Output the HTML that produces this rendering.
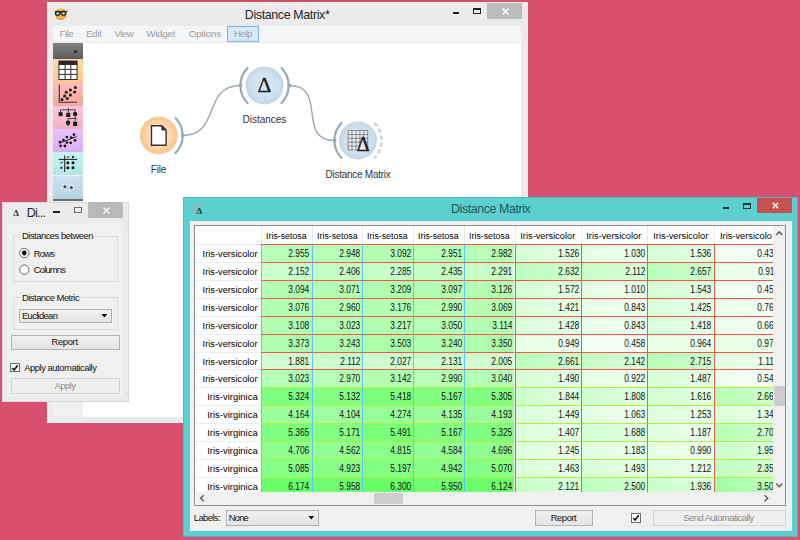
<!DOCTYPE html>
<html><head><meta charset="utf-8"><title>Distance Matrix</title>
<style>
html,body{margin:0;padding:0}
body{width:800px;height:540px;overflow:hidden;background:#d85070;position:relative;font-family:"Liberation Sans",sans-serif;font-size:9.5px;color:#000}
.abs,.abs *{position:absolute}
div,span,i,b{box-sizing:border-box}
.t{position:absolute;white-space:nowrap;line-height:1}
/* main window */
#mw{position:absolute;left:47px;top:2.4px;width:481px;height:420.6px;background:#ebebeb;box-shadow:inset 0 0 0 1px #efefef}
#menubar{position:absolute;left:53px;top:26.4px;width:468px;height:16.1px;background:#f5f6f7}
#help{position:absolute;left:227.2px;top:26.4px;width:31.5px;height:15.5px;background:#d8eaf9;border:1px solid #7eb4ea}
#canvas{position:absolute;left:83px;top:42.5px;width:438px;height:374px;background:#fff}
#tb{position:absolute;left:53px;top:42.5px;width:30px;height:374px;background:#f0f0f0}
#tb div{position:absolute;left:0;width:30px}
.nl{position:absolute;font-size:10px;line-height:12px;height:12px;white-space:nowrap;color:#333;transform:translateX(-50%)}
/* small window */
#sw{position:absolute;left:2px;top:201.5px;width:126.6px;height:200.6px;background:#ebebeb;border:1px solid #d9d9d9}
#swi{position:absolute;left:8px;top:225px;width:115px;height:171.3px;background:#f0f0f0}
.gb{position:absolute;border:1px solid #dcdcdc}
.btn{position:absolute;border:1px solid #b2b2b2;background:linear-gradient(#f1f1f1,#e4e4e4);text-align:center}
.btn.dis{border-color:#d5d5d5;background:#efefef;color:#8a8a8a}
.cb{position:absolute;border:1px solid #b2b2b2;background:linear-gradient(#f1f1f1,#e4e4e4)}
.chk{position:absolute;border:1px solid #707070;background:#fff}
/* big window */
#bw{position:absolute;left:183px;top:196.8px;width:614.5px;height:340.4px;background:#5ccfcf;border:1px solid #4fbcbc}
#bwi{position:absolute;left:189.5px;top:220.7px;width:602px;height:310.5px;background:#f0f0f0}
#tf{position:absolute;left:194px;top:225.4px;width:592.3px;height:280.3px;background:#fff;border:1px solid #8a8f98}
.tv{position:absolute;overflow:hidden;background:#fff;font-size:9.7px;}
.tv div{position:absolute;white-space:nowrap;overflow:hidden}
.ch{top:0;height:18px;line-height:19.5px;text-align:center;color:#000}
.hs{position:absolute;top:0;width:1px;height:18px;background:#e5eaf3}
.rh{left:0;width:66px;height:18px;line-height:18px;text-align:right;padding-right:3px;border-top:1px solid #e9eef6}
.c{height:18px;line-height:17px;text-align:right;padding-right:2px;border-left:1px solid;border-top:1px solid;color:#101010}
.tv b{display:inline-block;font-weight:normal;transform-origin:100% 50%}
.tv .ch b{transform-origin:50% 50%}
.n{transform:scaleX(0.8312)}.se{transform:scaleX(0.9063)}.ve{transform:scaleX(0.9550)}.vi{transform:scaleX(0.9770)}.n{font-size:10.1px}
.sb{position:absolute;background:#f0f0f0}
.thumb{position:absolute;background:#cdcdcd}
</style></head><body>

<!-- ================= main window ================= -->
<div id="mw"></div>
<svg style="position:absolute;left:53px;top:7px" width="16" height="14" viewBox="0 0 16 14">
 <defs><radialGradient id="og" cx="45%" cy="25%" r="80%"><stop offset="0" stop-color="#ffd034"/><stop offset="0.55" stop-color="#fba414"/><stop offset="1" stop-color="#ea7004"/></radialGradient>
 <radialGradient id="lg" cx="50%" cy="50%" r="60%"><stop offset="0" stop-color="#d6ecf4"/><stop offset="0.45" stop-color="#6f9fb4"/><stop offset="1" stop-color="#1f3f4c"/></radialGradient></defs>
 <circle cx="7.75" cy="7" r="5.8" fill="url(#og)"/>
 <ellipse cx="4.7" cy="6.3" rx="2.5" ry="2.2" fill="url(#lg)" stroke="#1d1d1d" stroke-width="1"/>
 <ellipse cx="10.5" cy="6.3" rx="2.5" ry="2.2" fill="url(#lg)" stroke="#1d1d1d" stroke-width="1"/>
 <path d="M2 4.6 H13 L14.3 4" stroke="#1d1d1d" stroke-width="1.1" fill="none"/>
 <path d="M5.2 10.1 Q7.7 11.3 10.2 10.1" stroke="#ffe7a0" stroke-width="1.1" fill="none"/>
</svg>
<!-- controls -->
<div style="position:absolute;left:452.5px;top:12px;width:6.5px;height:2px;background:#222"></div>
<div style="position:absolute;left:473px;top:8px;width:8px;height:6px;border:1px solid #222;border-top-width:2px"></div>
<div style="position:absolute;left:487px;top:2.5px;width:35px;height:16px;background:#bcbcbc"></div>
<svg style="position:absolute;left:500.5px;top:6.9px" width="9" height="9" viewBox="0 0 9 9"><path d="M1.5 1.5 L7.5 7.5 M7.5 1.5 L1.5 7.5" stroke="#fff" stroke-width="1.4"/></svg>

<div id="menubar">
</div>
<div id="help"></div>

<div id="canvas"></div>
<div id="tb">
 <div style="top:0.5px;height:16px;background:linear-gradient(#828282,#5c5c5c)"></div>
 <div style="top:16.5px;height:23.3px;background:linear-gradient(#ffd9a6,#fcc98c)"></div>
 <div style="top:39.8px;height:23.3px;background:linear-gradient(#ffbcb6,#f4a7a0)"></div>
 <div style="top:63.1px;height:23.3px;background:linear-gradient(#fcc6dd,#f1b0c9)"></div>
 <div style="top:86.4px;height:23.3px;background:linear-gradient(#e9c2fd,#dcaef4)"></div>
 <div style="top:109.7px;height:23.3px;background:linear-gradient(#c5f5f3,#b0e6e4)"></div>
 <div style="top:133px;height:23.5px;background:linear-gradient(#cfe3f0,#b7d1e3)"></div>
 <div style="top:156.5px;height:2px;background:#6e6e6e"></div>
</div>
<svg style="position:absolute;left:53px;top:42px" width="30" height="160" viewBox="53 42 30 160">
 <!-- table icon -->
 <rect x="58.9" y="61" width="18.2" height="18.5" fill="#fff" stroke="#2e2e2e" stroke-width="1"/>
 <rect x="58.9" y="61" width="18.2" height="4" fill="#2a2a2a"/>
 <path d="M65.1 65v14.5M70.8 65v14.5M58.9 69.4h18.2M58.9 74.4h18.2" stroke="#2e2e2e" stroke-width="1" fill="none"/>
 <!-- scatter icon -->
 <path d="M59.3 84.4V102.3H77" stroke="#333" stroke-width="1.1" fill="none"/>
 <g fill="#161616"><circle cx="62" cy="99.4" r="1.5"/><circle cx="64.6" cy="96.1" r="1.5"/><circle cx="67.3" cy="98.5" r="1.5"/><circle cx="66.3" cy="92.2" r="1.5"/><circle cx="70.4" cy="95.1" r="1.5"/><circle cx="70.4" cy="89.9" r="1.5"/><circle cx="74.6" cy="92" r="1.5"/><circle cx="75.3" cy="87.4" r="1.5"/></g>
 <!-- tree icon -->
 <path d="M68.3 107.8V113M60.6 113V109.8H75.2V113M75.2 114V118.5M68.2 121V118.5H76.6M75.2 118.5V122M68.2 124v2.2" stroke="#333" stroke-width="0.9" fill="none"/>
 <g fill="#1c1c1c"><rect x="58.6" y="112.2" width="4" height="4"/><rect x="66.2" y="112.9" width="4.1" height="4.1"/><circle cx="75.1" cy="113.9" r="2.2"/><circle cx="68.1" cy="122.8" r="2.2"/><rect x="73.1" y="121.8" width="4.1" height="4.2"/></g>
 <!-- regression icon -->
 <path d="M59.2 143.2L76.6 136.6" stroke="#222" stroke-width="1" fill="none"/>
 <g fill="#161616"><circle cx="60.1" cy="142.1" r="1.4"/><circle cx="60.6" cy="145.8" r="1.4"/><circle cx="63.5" cy="140.1" r="1.4"/><circle cx="64.9" cy="146" r="1.4"/><circle cx="66.9" cy="137.1" r="1.4"/><circle cx="66.9" cy="142.6" r="1.4"/><circle cx="70.7" cy="142.8" r="1.4"/><circle cx="71.2" cy="137.7" r="1.4"/><circle cx="74" cy="134.6" r="1.4"/><circle cx="75.1" cy="140.4" r="1.4"/></g>
 <!-- confusion icon -->
 <path d="M58.5 159.4H77.2M64.7 155.5V172" stroke="#1c1c1c" stroke-width="1" fill="none"/>
 <g fill="#111"><circle cx="67.8" cy="162.8" r="1.5"/><circle cx="73" cy="162.8" r="1.5"/><circle cx="67.8" cy="167.8" r="1.5"/><circle cx="73" cy="167.8" r="1.5"/></g>
 <path d="M66.8 157l0.9 0.8l1.6-1.8M60.4 162.6l0.9 0.8l1.6-1.8" stroke="#1a1a1a" stroke-width="1" fill="none"/>
 <path d="M72.2 156.2l1.6 1.6m0-1.6l-1.6 1.6M60.6 167l1.6 1.6m0-1.6l-1.6 1.6" stroke="#1a1a1a" stroke-width="1.1" fill="none"/>
 <!-- faded icon -->
 <g fill="#f0eaee" opacity="0.95"><circle cx="63" cy="184.6" r="1"/><circle cx="66" cy="184" r="1"/><circle cx="62.3" cy="188.6" r="1"/><circle cx="65.8" cy="189.7" r="1"/><circle cx="70.2" cy="185" r="1"/><circle cx="73.2" cy="186" r="1"/><circle cx="69.5" cy="190.5" r="1"/><circle cx="73.4" cy="189.5" r="1"/></g>
 <circle cx="64.9" cy="186.8" r="1.3" fill="#333"/><circle cx="71.4" cy="187.6" r="1.3" fill="#333"/>
</svg>

<!-- canvas scene -->
<svg style="position:absolute;left:83px;top:42.5px" width="438" height="374" viewBox="83 42.5 438 374">
 <defs>
  <radialGradient id="gf" cx="50%" cy="50%" r="50%"><stop offset="0" stop-color="#fde6ca"/><stop offset="0.6" stop-color="#fcd9b0"/><stop offset="0.93" stop-color="#fac790"/><stop offset="1" stop-color="#fbd0a4"/></radialGradient>
  <radialGradient id="gd" cx="50%" cy="50%" r="50%"><stop offset="0" stop-color="#dbe8f2"/><stop offset="0.75" stop-color="#cfe0ed"/><stop offset="1" stop-color="#c0d5e6"/></radialGradient>
 </defs>
 <g fill="#98abb4" stroke="none"><circle cx="182.8" cy="135" r="2"/><circle cx="240.6" cy="85" r="2"/><circle cx="289.4" cy="85" r="2"/><circle cx="334.6" cy="140" r="2"/></g>
 <g fill="none" stroke="#9bacb3" stroke-width="1.5">
  <path d="M182.5 135 C221 135 202 85 240.5 85"/>
  <path d="M289.5 85 C328 85 296 140 334.5 140"/>
 </g>
 <g fill="none" stroke="#98abb4" stroke-width="2.2" stroke-linecap="round">
  <path d="M175.5 117.5 A25 25 0 0 1 175.5 152.5"/>
  <path d="M247.5 67.5 A25 25 0 0 0 247.5 102.5"/>
  <path d="M281.5 67.5 A25 25 0 0 1 281.5 102.5"/>
  <path d="M341.5 122.5 A25 25 0 0 0 341.5 157.5"/>
 </g>
 <path d="M374.5 122.5 A25 25 0 0 1 374.5 157.5" fill="none" stroke="#cdd5d9" stroke-width="2.6" stroke-dasharray="4.3 2.8"/>
 <circle cx="158.8" cy="135" r="19" fill="url(#gf)"/>
 <circle cx="264.5" cy="85" r="19" fill="url(#gd)"/>
 <circle cx="358" cy="140" r="19" fill="url(#gd)"/>
 <!-- file icon -->
 <path d="M151.5 125.2 H161.8 L166.1 129.5 V144.7 H151.5 Z" fill="#fff" stroke="#333" stroke-width="1.4" stroke-linejoin="miter"/>
 <path d="M161.8 125.2 V129.5 H166.1 Z" fill="#333" stroke="#333" stroke-width="0.8"/>
 <!-- matrix icon -->
 <g stroke="#5c5c5c" stroke-width="0.65" fill="none">
  <rect x="348.1" y="130.2" width="19.7" height="19.2" fill="#e3edf6"/>
  <path d="M348.1 134h19.7M348.1 137.9h19.7M348.1 141.7h19.7M348.1 145.6h19.7M352 130.2v19.2M356 130.2v19.2M359.9 130.2v19.2M363.9 130.2v19.2"/>
 </g>
 <polygon points="363.2,139 358.6,149.4 368,149.4" fill="#eef3f8" opacity="0.85"/>
 <text x="264.5" y="91.8" text-anchor="middle" font-family="Liberation Serif, serif" font-size="21.5" fill="#1a1a1a" stroke="#1a1a1a" stroke-width="0.3">Δ</text>
 <text x="363.1" y="150.2" text-anchor="middle" font-family="Liberation Serif, serif" font-size="20" fill="#1e1e1e" stroke="#1e1e1e" stroke-width="0.45">Δ</text>
</svg>

<!-- ================= small window ================= -->
<div id="sw"></div>
<div id="swi"></div>
<div style="position:absolute;left:53px;top:211px;width:7px;height:2px;background:#222"></div>
<div style="position:absolute;left:74px;top:207px;width:8px;height:5.5px;border:1px solid #6a6a6a;border-top-width:1.6px"></div>
<div style="position:absolute;left:88px;top:202px;width:35px;height:15.5px;background:#b9b9b9"></div>
<svg style="position:absolute;left:101.5px;top:206px" width="9" height="9" viewBox="0 0 9 9"><path d="M1.5 1.5 L7.5 7.5 M7.5 1.5 L1.5 7.5" stroke="#fff" stroke-width="1.3"/></svg>

<div class="gb" style="left:13.2px;top:235.5px;width:104.5px;height:46.8px"></div>
<svg style="position:absolute;left:18px;top:246px" width="13" height="31" viewBox="0 0 13 31">
 <circle cx="6.3" cy="7" r="4.7" fill="#fff" stroke="#5a5a5a" stroke-width="0.9"/>
 <circle cx="6.3" cy="7" r="2.4" fill="#111"/>
 <circle cx="6.3" cy="23.7" r="4.7" fill="#fff" stroke="#5a5a5a" stroke-width="0.9"/>
</svg>

<div class="gb" style="left:13.2px;top:297px;width:104.5px;height:32.5px"></div>
<div class="cb" style="left:19.3px;top:308.5px;width:92.5px;height:14.5px"></div>
<svg style="position:absolute;left:101px;top:314px" width="7" height="4" viewBox="0 0 7 4"><path d="M0.3 0 H6.3 L3.3 3.6 Z" fill="#111"/></svg>

<div class="btn" style="left:11px;top:334.5px;width:109px;height:15.3px"></div>

<div class="chk" style="left:10.2px;top:362.5px;width:9.7px;height:9.7px"></div>
<svg style="position:absolute;left:11.2px;top:363.5px" width="8" height="8" viewBox="0 0 8 8"><path d="M1.2 4 L3.1 6 L6.8 1.3" fill="none" stroke="#111" stroke-width="1.5"/></svg>

<div class="btn dis" style="left:11px;top:377.8px;width:109px;height:15.8px"></div>

<!-- ================= big window ================= -->
<div id="bw"></div>
<div style="position:absolute;left:193px;top:204px;width:8.5px;height:8.5px;background:#84bcbe"></div>
<div style="position:absolute;left:723px;top:206.5px;width:6px;height:2px;background:#163838"></div>
<div style="position:absolute;left:743px;top:202.5px;width:8.3px;height:6.3px;border:1px solid #163838;border-top-width:2px"></div>
<div style="position:absolute;left:757px;top:197.5px;width:35px;height:15.5px;background:#c75050"></div>
<svg style="position:absolute;left:770.5px;top:201.2px" width="9" height="9" viewBox="0 0 9 9"><path d="M1.8 1.8 L7.2 7.2 M7.2 1.8 L1.8 7.2" stroke="#fff" stroke-width="1.25"/></svg>

<div id="bwi"></div>
<div id="tf"></div>
<div class="tv" style="left:195px;top:226px;width:578px;height:266px">
<div class="ch" style="left:66.00px;width:50.70px"><b class="se">Iris-setosa</b></div>
<div class="ch" style="left:116.70px;width:50.70px"><b class="se">Iris-setosa</b></div>
<div class="ch" style="left:167.40px;width:50.70px"><b class="se">Iris-setosa</b></div>
<div class="ch" style="left:218.10px;width:50.70px"><b class="se">Iris-setosa</b></div>
<div class="ch" style="left:268.80px;width:50.70px"><b class="se">Iris-setosa</b></div>
<div class="ch" style="left:319.50px;width:66.40px"><b class="ve">Iris-versicolor</b></div>
<div class="ch" style="left:385.90px;width:66.40px"><b class="ve">Iris-versicolor</b></div>
<div class="ch" style="left:452.30px;width:66.40px"><b class="ve">Iris-versicolor</b></div>
<div class="ch" style="left:518.70px;width:58.70px;text-align:left;padding-left:5.90px"><b class="ve" style="transform-origin:0 50%">Iris-versicolor</b></div>
<i class="hs" style="left:66.00px"></i>
<i class="hs" style="left:116.70px"></i>
<i class="hs" style="left:167.40px"></i>
<i class="hs" style="left:218.10px"></i>
<i class="hs" style="left:268.80px"></i>
<i class="hs" style="left:319.50px"></i>
<i class="hs" style="left:385.90px"></i>
<i class="hs" style="left:452.30px"></i>
<i class="hs" style="left:518.70px"></i>
<i class="hs" style="left:585.10px"></i>
<div class="rh" style="top:18.00px"><b class="ve">Iris-versicolor</b></div>
<div class="c" style="left:66.00px;top:18.00px;width:50.70px;background:#b8ffb8;border-left-color:#5cc4f8;border-top-color:#ee5a44"><b class="n">2.955</b></div>
<div class="c" style="left:116.70px;top:18.00px;width:50.70px;background:#b8ffb8;border-left-color:#5cc4f8;border-top-color:#ee5a44"><b class="n">2.948</b></div>
<div class="c" style="left:167.40px;top:18.00px;width:50.70px;background:#b5ffb5;border-left-color:#5cc4f8;border-top-color:#ee5a44"><b class="n">3.092</b></div>
<div class="c" style="left:218.10px;top:18.00px;width:50.70px;background:#b8ffb8;border-left-color:#5cc4f8;border-top-color:#ee5a44"><b class="n">2.951</b></div>
<div class="c" style="left:268.80px;top:18.00px;width:50.70px;background:#b7ffb7;border-left-color:#5cc4f8;border-top-color:#ee5a44"><b class="n">2.982</b></div>
<div class="c" style="left:319.50px;top:18.00px;width:66.40px;background:linear-gradient(90deg,#d6ffd6,#e5ffe5);border-left-color:#ee5a44;border-top-color:#ee5a44"><b class="n">1.526</b></div>
<div class="c" style="left:385.90px;top:18.00px;width:66.40px;background:linear-gradient(90deg,#e3ffe3,#edffed);border-left-color:#ee5a44;border-top-color:#ee5a44"><b class="n">1.030</b></div>
<div class="c" style="left:452.30px;top:18.00px;width:66.40px;background:linear-gradient(90deg,#d6ffd6,#e4ffe4);border-left-color:#ee5a44;border-top-color:#ee5a44"><b class="n">1.536</b></div>
<div class="c" style="left:518.70px;top:18.00px;width:66.40px;background:linear-gradient(90deg,#f3fff3,#f7fff7);border-left-color:#ee5a44;border-top-color:#ee5a44"><b class="n">0.436</b></div>
<div class="rh" style="top:35.92px"><b class="ve">Iris-versicolor</b></div>
<div class="c" style="left:66.00px;top:35.92px;width:50.70px;background:#cbffcb;border-left-color:#5cc4f8;border-top-color:#ee5a44"><b class="n">2.152</b></div>
<div class="c" style="left:116.70px;top:35.92px;width:50.70px;background:#c5ffc5;border-left-color:#5cc4f8;border-top-color:#ee5a44"><b class="n">2.406</b></div>
<div class="c" style="left:167.40px;top:35.92px;width:50.70px;background:#c8ffc8;border-left-color:#5cc4f8;border-top-color:#ee5a44"><b class="n">2.285</b></div>
<div class="c" style="left:218.10px;top:35.92px;width:50.70px;background:#c5ffc5;border-left-color:#5cc4f8;border-top-color:#ee5a44"><b class="n">2.435</b></div>
<div class="c" style="left:268.80px;top:35.92px;width:50.70px;background:#c8ffc8;border-left-color:#5cc4f8;border-top-color:#ee5a44"><b class="n">2.291</b></div>
<div class="c" style="left:319.50px;top:35.92px;width:66.40px;background:linear-gradient(90deg,#b8ffb8,#d2ffd2);border-left-color:#ee5a44;border-top-color:#ee5a44"><b class="n">2.632</b></div>
<div class="c" style="left:385.90px;top:35.92px;width:66.40px;background:linear-gradient(90deg,#c6ffc6,#dbffdb);border-left-color:#ee5a44;border-top-color:#ee5a44"><b class="n">2.112</b></div>
<div class="c" style="left:452.30px;top:35.92px;width:66.40px;background:linear-gradient(90deg,#b8ffb8,#d1ffd1);border-left-color:#ee5a44;border-top-color:#ee5a44"><b class="n">2.657</b></div>
<div class="c" style="left:518.70px;top:35.92px;width:66.40px;background:linear-gradient(90deg,#e7ffe7,#efffef);border-left-color:#ee5a44;border-top-color:#ee5a44"><b class="n">0.911</b></div>
<div class="rh" style="top:53.84px"><b class="ve">Iris-versicolor</b></div>
<div class="c" style="left:66.00px;top:53.84px;width:50.70px;background:#b5ffb5;border-left-color:#5cc4f8;border-top-color:#ee5a44"><b class="n">3.094</b></div>
<div class="c" style="left:116.70px;top:53.84px;width:50.70px;background:#b5ffb5;border-left-color:#5cc4f8;border-top-color:#ee5a44"><b class="n">3.071</b></div>
<div class="c" style="left:167.40px;top:53.84px;width:50.70px;background:#b2ffb2;border-left-color:#5cc4f8;border-top-color:#ee5a44"><b class="n">3.209</b></div>
<div class="c" style="left:218.10px;top:53.84px;width:50.70px;background:#b5ffb5;border-left-color:#5cc4f8;border-top-color:#ee5a44"><b class="n">3.097</b></div>
<div class="c" style="left:268.80px;top:53.84px;width:50.70px;background:#b4ffb4;border-left-color:#5cc4f8;border-top-color:#ee5a44"><b class="n">3.126</b></div>
<div class="c" style="left:319.50px;top:53.84px;width:66.40px;background:linear-gradient(90deg,#d5ffd5,#e4ffe4);border-left-color:#ee5a44;border-top-color:#ee5a44"><b class="n">1.572</b></div>
<div class="c" style="left:385.90px;top:53.84px;width:66.40px;background:linear-gradient(90deg,#e4ffe4,#eeffee);border-left-color:#ee5a44;border-top-color:#ee5a44"><b class="n">1.010</b></div>
<div class="c" style="left:452.30px;top:53.84px;width:66.40px;background:linear-gradient(90deg,#d6ffd6,#e4ffe4);border-left-color:#ee5a44;border-top-color:#ee5a44"><b class="n">1.543</b></div>
<div class="c" style="left:518.70px;top:53.84px;width:66.40px;background:linear-gradient(90deg,#f3fff3,#f7fff7);border-left-color:#ee5a44;border-top-color:#ee5a44"><b class="n">0.458</b></div>
<div class="rh" style="top:71.76px"><b class="ve">Iris-versicolor</b></div>
<div class="c" style="left:66.00px;top:71.76px;width:50.70px;background:#b5ffb5;border-left-color:#5cc4f8;border-top-color:#ee5a44"><b class="n">3.076</b></div>
<div class="c" style="left:116.70px;top:71.76px;width:50.70px;background:#b8ffb8;border-left-color:#5cc4f8;border-top-color:#ee5a44"><b class="n">2.960</b></div>
<div class="c" style="left:167.40px;top:71.76px;width:50.70px;background:#b3ffb3;border-left-color:#5cc4f8;border-top-color:#ee5a44"><b class="n">3.176</b></div>
<div class="c" style="left:218.10px;top:71.76px;width:50.70px;background:#b7ffb7;border-left-color:#5cc4f8;border-top-color:#ee5a44"><b class="n">2.990</b></div>
<div class="c" style="left:268.80px;top:71.76px;width:50.70px;background:#b5ffb5;border-left-color:#5cc4f8;border-top-color:#ee5a44"><b class="n">3.069</b></div>
<div class="c" style="left:319.50px;top:71.76px;width:66.40px;background:linear-gradient(90deg,#d9ffd9,#e6ffe6);border-left-color:#ee5a44;border-top-color:#ee5a44"><b class="n">1.421</b></div>
<div class="c" style="left:385.90px;top:71.76px;width:66.40px;background:linear-gradient(90deg,#e8ffe8,#f0fff0);border-left-color:#ee5a44;border-top-color:#ee5a44"><b class="n">0.843</b></div>
<div class="c" style="left:452.30px;top:71.76px;width:66.40px;background:linear-gradient(90deg,#d9ffd9,#e6ffe6);border-left-color:#ee5a44;border-top-color:#ee5a44"><b class="n">1.425</b></div>
<div class="c" style="left:518.70px;top:71.76px;width:66.40px;background:linear-gradient(90deg,#eaffea,#f2fff2);border-left-color:#ee5a44;border-top-color:#ee5a44"><b class="n">0.768</b></div>
<div class="rh" style="top:89.68px"><b class="ve">Iris-versicolor</b></div>
<div class="c" style="left:66.00px;top:89.68px;width:50.70px;background:#b4ffb4;border-left-color:#5cc4f8;border-top-color:#ee5a44"><b class="n">3.108</b></div>
<div class="c" style="left:116.70px;top:89.68px;width:50.70px;background:#b6ffb6;border-left-color:#5cc4f8;border-top-color:#ee5a44"><b class="n">3.023</b></div>
<div class="c" style="left:167.40px;top:89.68px;width:50.70px;background:#b2ffb2;border-left-color:#5cc4f8;border-top-color:#ee5a44"><b class="n">3.217</b></div>
<div class="c" style="left:218.10px;top:89.68px;width:50.70px;background:#b6ffb6;border-left-color:#5cc4f8;border-top-color:#ee5a44"><b class="n">3.050</b></div>
<div class="c" style="left:268.80px;top:89.68px;width:50.70px;background:#b4ffb4;border-left-color:#5cc4f8;border-top-color:#ee5a44"><b class="n">3.114</b></div>
<div class="c" style="left:319.50px;top:89.68px;width:66.40px;background:linear-gradient(90deg,#d9ffd9,#e6ffe6);border-left-color:#ee5a44;border-top-color:#ee5a44"><b class="n">1.428</b></div>
<div class="c" style="left:385.90px;top:89.68px;width:66.40px;background:linear-gradient(90deg,#e8ffe8,#f0fff0);border-left-color:#ee5a44;border-top-color:#ee5a44"><b class="n">0.843</b></div>
<div class="c" style="left:452.30px;top:89.68px;width:66.40px;background:linear-gradient(90deg,#d9ffd9,#e7ffe7);border-left-color:#ee5a44;border-top-color:#ee5a44"><b class="n">1.418</b></div>
<div class="c" style="left:518.70px;top:89.68px;width:66.40px;background:linear-gradient(90deg,#edffed,#f4fff4);border-left-color:#ee5a44;border-top-color:#ee5a44"><b class="n">0.663</b></div>
<div class="rh" style="top:107.60px"><b class="ve">Iris-versicolor</b></div>
<div class="c" style="left:66.00px;top:107.60px;width:50.70px;background:#aeffae;border-left-color:#5cc4f8;border-top-color:#ee5a44"><b class="n">3.373</b></div>
<div class="c" style="left:116.70px;top:107.60px;width:50.70px;background:#b1ffb1;border-left-color:#5cc4f8;border-top-color:#ee5a44"><b class="n">3.243</b></div>
<div class="c" style="left:167.40px;top:107.60px;width:50.70px;background:#abffab;border-left-color:#5cc4f8;border-top-color:#ee5a44"><b class="n">3.503</b></div>
<div class="c" style="left:218.10px;top:107.60px;width:50.70px;background:#b1ffb1;border-left-color:#5cc4f8;border-top-color:#ee5a44"><b class="n">3.240</b></div>
<div class="c" style="left:268.80px;top:107.60px;width:50.70px;background:#afffaf;border-left-color:#5cc4f8;border-top-color:#ee5a44"><b class="n">3.350</b></div>
<div class="c" style="left:319.50px;top:107.60px;width:66.40px;background:linear-gradient(90deg,#e5ffe5,#efffef);border-left-color:#ee5a44;border-top-color:#ee5a44"><b class="n">0.949</b></div>
<div class="c" style="left:385.90px;top:107.60px;width:66.40px;background:linear-gradient(90deg,#f3fff3,#f7fff7);border-left-color:#ee5a44;border-top-color:#ee5a44"><b class="n">0.458</b></div>
<div class="c" style="left:452.30px;top:107.60px;width:66.40px;background:linear-gradient(90deg,#e5ffe5,#eeffee);border-left-color:#ee5a44;border-top-color:#ee5a44"><b class="n">0.964</b></div>
<div class="c" style="left:518.70px;top:107.60px;width:66.40px;background:linear-gradient(90deg,#e5ffe5,#eeffee);border-left-color:#ee5a44;border-top-color:#ee5a44"><b class="n">0.975</b></div>
<div class="rh" style="top:125.52px"><b class="ve">Iris-versicolor</b></div>
<div class="c" style="left:66.00px;top:125.52px;width:50.70px;background:#d2ffd2;border-left-color:#5cc4f8;border-top-color:#ee5a44"><b class="n">1.881</b></div>
<div class="c" style="left:116.70px;top:125.52px;width:50.70px;background:#ccffcc;border-left-color:#5cc4f8;border-top-color:#ee5a44"><b class="n">2.112</b></div>
<div class="c" style="left:167.40px;top:125.52px;width:50.70px;background:#ceffce;border-left-color:#5cc4f8;border-top-color:#ee5a44"><b class="n">2.027</b></div>
<div class="c" style="left:218.10px;top:125.52px;width:50.70px;background:#ccffcc;border-left-color:#5cc4f8;border-top-color:#ee5a44"><b class="n">2.131</b></div>
<div class="c" style="left:268.80px;top:125.52px;width:50.70px;background:#cfffcf;border-left-color:#5cc4f8;border-top-color:#ee5a44"><b class="n">2.005</b></div>
<div class="c" style="left:319.50px;top:125.52px;width:66.40px;background:linear-gradient(90deg,#b7ffb7,#d1ffd1);border-left-color:#ee5a44;border-top-color:#ee5a44"><b class="n">2.661</b></div>
<div class="c" style="left:385.90px;top:125.52px;width:66.40px;background:linear-gradient(90deg,#c5ffc5,#daffda);border-left-color:#ee5a44;border-top-color:#ee5a44"><b class="n">2.142</b></div>
<div class="c" style="left:452.30px;top:125.52px;width:66.40px;background:linear-gradient(90deg,#b6ffb6,#d0ffd0);border-left-color:#ee5a44;border-top-color:#ee5a44"><b class="n">2.715</b></div>
<div class="c" style="left:518.70px;top:125.52px;width:66.40px;background:linear-gradient(90deg,#e1ffe1,#ecffec);border-left-color:#ee5a44;border-top-color:#ee5a44"><b class="n">1.118</b></div>
<div class="rh" style="top:143.44px"><b class="ve">Iris-versicolor</b></div>
<div class="c" style="left:66.00px;top:143.44px;width:50.70px;background:#b6ffb6;border-left-color:#5cc4f8;border-top-color:#ee5a44"><b class="n">3.023</b></div>
<div class="c" style="left:116.70px;top:143.44px;width:50.70px;background:#b8ffb8;border-left-color:#5cc4f8;border-top-color:#ee5a44"><b class="n">2.970</b></div>
<div class="c" style="left:167.40px;top:143.44px;width:50.70px;background:#b4ffb4;border-left-color:#5cc4f8;border-top-color:#ee5a44"><b class="n">3.142</b></div>
<div class="c" style="left:218.10px;top:143.44px;width:50.70px;background:#b7ffb7;border-left-color:#5cc4f8;border-top-color:#ee5a44"><b class="n">2.990</b></div>
<div class="c" style="left:268.80px;top:143.44px;width:50.70px;background:#b6ffb6;border-left-color:#5cc4f8;border-top-color:#ee5a44"><b class="n">3.040</b></div>
<div class="c" style="left:319.50px;top:143.44px;width:66.40px;background:linear-gradient(90deg,#d7ffd7,#e5ffe5);border-left-color:#ee5a44;border-top-color:#ee5a44"><b class="n">1.490</b></div>
<div class="c" style="left:385.90px;top:143.44px;width:66.40px;background:linear-gradient(90deg,#e6ffe6,#efffef);border-left-color:#ee5a44;border-top-color:#ee5a44"><b class="n">0.922</b></div>
<div class="c" style="left:452.30px;top:143.44px;width:66.40px;background:linear-gradient(90deg,#d7ffd7,#e5ffe5);border-left-color:#ee5a44;border-top-color:#ee5a44"><b class="n">1.487</b></div>
<div class="c" style="left:518.70px;top:143.44px;width:66.40px;background:linear-gradient(90deg,#f0fff0,#f6fff6);border-left-color:#ee5a44;border-top-color:#ee5a44"><b class="n">0.548</b></div>
<div class="rh" style="top:161.36px"><b class="vi">Iris-virginica</b></div>
<div class="c" style="left:66.00px;top:161.36px;width:50.70px;background:#7fff7f;border-left-color:#5cc4f8;border-top-color:#b2f03e"><b class="n">5.324</b></div>
<div class="c" style="left:116.70px;top:161.36px;width:50.70px;background:#84ff84;border-left-color:#5cc4f8;border-top-color:#b2f03e"><b class="n">5.132</b></div>
<div class="c" style="left:167.40px;top:161.36px;width:50.70px;background:#7dff7d;border-left-color:#5cc4f8;border-top-color:#b2f03e"><b class="n">5.418</b></div>
<div class="c" style="left:218.10px;top:161.36px;width:50.70px;background:#83ff83;border-left-color:#5cc4f8;border-top-color:#b2f03e"><b class="n">5.167</b></div>
<div class="c" style="left:268.80px;top:161.36px;width:50.70px;background:#80ff80;border-left-color:#5cc4f8;border-top-color:#b2f03e"><b class="n">5.305</b></div>
<div class="c" style="left:319.50px;top:161.36px;width:66.40px;background:linear-gradient(90deg,#cdffcd,#dfffdf);border-left-color:#ee5a44;border-top-color:#b2f03e"><b class="n">1.844</b></div>
<div class="c" style="left:385.90px;top:161.36px;width:66.40px;background:linear-gradient(90deg,#ceffce,#e0ffe0);border-left-color:#ee5a44;border-top-color:#b2f03e"><b class="n">1.808</b></div>
<div class="c" style="left:452.30px;top:161.36px;width:66.40px;background:linear-gradient(90deg,#d4ffd4,#e3ffe3);border-left-color:#ee5a44;border-top-color:#b2f03e"><b class="n">1.616</b></div>
<div class="c" style="left:518.70px;top:161.36px;width:66.40px;background:linear-gradient(90deg,#b7ffb7,#d1ffd1);border-left-color:#ee5a44;border-top-color:#b2f03e"><b class="n">2.666</b></div>
<div class="rh" style="top:179.28px"><b class="vi">Iris-virginica</b></div>
<div class="c" style="left:66.00px;top:179.28px;width:50.70px;background:#9bff9b;border-left-color:#5cc4f8;border-top-color:#b2f03e"><b class="n">4.164</b></div>
<div class="c" style="left:116.70px;top:179.28px;width:50.70px;background:#9dff9d;border-left-color:#5cc4f8;border-top-color:#b2f03e"><b class="n">4.104</b></div>
<div class="c" style="left:167.40px;top:179.28px;width:50.70px;background:#98ff98;border-left-color:#5cc4f8;border-top-color:#b2f03e"><b class="n">4.274</b></div>
<div class="c" style="left:218.10px;top:179.28px;width:50.70px;background:#9cff9c;border-left-color:#5cc4f8;border-top-color:#b2f03e"><b class="n">4.135</b></div>
<div class="c" style="left:268.80px;top:179.28px;width:50.70px;background:#9aff9a;border-left-color:#5cc4f8;border-top-color:#b2f03e"><b class="n">4.193</b></div>
<div class="c" style="left:319.50px;top:179.28px;width:66.40px;background:linear-gradient(90deg,#d8ffd8,#e6ffe6);border-left-color:#ee5a44;border-top-color:#b2f03e"><b class="n">1.449</b></div>
<div class="c" style="left:385.90px;top:179.28px;width:66.40px;background:linear-gradient(90deg,#e2ffe2,#edffed);border-left-color:#ee5a44;border-top-color:#b2f03e"><b class="n">1.063</b></div>
<div class="c" style="left:452.30px;top:179.28px;width:66.40px;background:linear-gradient(90deg,#ddffdd,#e9ffe9);border-left-color:#ee5a44;border-top-color:#b2f03e"><b class="n">1.253</b></div>
<div class="c" style="left:518.70px;top:179.28px;width:66.40px;background:linear-gradient(90deg,#dbffdb,#e8ffe8);border-left-color:#ee5a44;border-top-color:#b2f03e"><b class="n">1.349</b></div>
<div class="rh" style="top:197.20px"><b class="vi">Iris-virginica</b></div>
<div class="c" style="left:66.00px;top:197.20px;width:50.70px;background:#7eff7e;border-left-color:#5cc4f8;border-top-color:#b2f03e"><b class="n">5.365</b></div>
<div class="c" style="left:116.70px;top:197.20px;width:50.70px;background:#83ff83;border-left-color:#5cc4f8;border-top-color:#b2f03e"><b class="n">5.171</b></div>
<div class="c" style="left:167.40px;top:197.20px;width:50.70px;background:#7bff7b;border-left-color:#5cc4f8;border-top-color:#b2f03e"><b class="n">5.491</b></div>
<div class="c" style="left:218.10px;top:197.20px;width:50.70px;background:#83ff83;border-left-color:#5cc4f8;border-top-color:#b2f03e"><b class="n">5.167</b></div>
<div class="c" style="left:268.80px;top:197.20px;width:50.70px;background:#7fff7f;border-left-color:#5cc4f8;border-top-color:#b2f03e"><b class="n">5.325</b></div>
<div class="c" style="left:319.50px;top:197.20px;width:66.40px;background:linear-gradient(90deg,#d9ffd9,#e7ffe7);border-left-color:#ee5a44;border-top-color:#b2f03e"><b class="n">1.407</b></div>
<div class="c" style="left:385.90px;top:197.20px;width:66.40px;background:linear-gradient(90deg,#d2ffd2,#e2ffe2);border-left-color:#ee5a44;border-top-color:#b2f03e"><b class="n">1.688</b></div>
<div class="c" style="left:452.30px;top:197.20px;width:66.40px;background:linear-gradient(90deg,#dfffdf,#eaffea);border-left-color:#ee5a44;border-top-color:#b2f03e"><b class="n">1.187</b></div>
<div class="c" style="left:518.70px;top:197.20px;width:66.40px;background:linear-gradient(90deg,#b6ffb6,#d0ffd0);border-left-color:#ee5a44;border-top-color:#b2f03e"><b class="n">2.707</b></div>
<div class="rh" style="top:215.12px"><b class="vi">Iris-virginica</b></div>
<div class="c" style="left:66.00px;top:215.12px;width:50.70px;background:#8eff8e;border-left-color:#5cc4f8;border-top-color:#b2f03e"><b class="n">4.706</b></div>
<div class="c" style="left:116.70px;top:215.12px;width:50.70px;background:#92ff92;border-left-color:#5cc4f8;border-top-color:#b2f03e"><b class="n">4.562</b></div>
<div class="c" style="left:167.40px;top:215.12px;width:50.70px;background:#8bff8b;border-left-color:#5cc4f8;border-top-color:#b2f03e"><b class="n">4.815</b></div>
<div class="c" style="left:218.10px;top:215.12px;width:50.70px;background:#91ff91;border-left-color:#5cc4f8;border-top-color:#b2f03e"><b class="n">4.584</b></div>
<div class="c" style="left:268.80px;top:215.12px;width:50.70px;background:#8eff8e;border-left-color:#5cc4f8;border-top-color:#b2f03e"><b class="n">4.696</b></div>
<div class="c" style="left:319.50px;top:215.12px;width:66.40px;background:linear-gradient(90deg,#deffde,#e9ffe9);border-left-color:#ee5a44;border-top-color:#b2f03e"><b class="n">1.245</b></div>
<div class="c" style="left:385.90px;top:215.12px;width:66.40px;background:linear-gradient(90deg,#dfffdf,#ebffeb);border-left-color:#ee5a44;border-top-color:#b2f03e"><b class="n">1.183</b></div>
<div class="c" style="left:452.30px;top:215.12px;width:66.40px;background:linear-gradient(90deg,#e4ffe4,#eeffee);border-left-color:#ee5a44;border-top-color:#b2f03e"><b class="n">0.990</b></div>
<div class="c" style="left:518.70px;top:215.12px;width:66.40px;background:linear-gradient(90deg,#caffca,#ddffdd);border-left-color:#ee5a44;border-top-color:#b2f03e"><b class="n">1.954</b></div>
<div class="rh" style="top:233.04px"><b class="vi">Iris-virginica</b></div>
<div class="c" style="left:66.00px;top:233.04px;width:50.70px;background:#85ff85;border-left-color:#5cc4f8;border-top-color:#b2f03e"><b class="n">5.085</b></div>
<div class="c" style="left:116.70px;top:233.04px;width:50.70px;background:#89ff89;border-left-color:#5cc4f8;border-top-color:#b2f03e"><b class="n">4.923</b></div>
<div class="c" style="left:167.40px;top:233.04px;width:50.70px;background:#82ff82;border-left-color:#5cc4f8;border-top-color:#b2f03e"><b class="n">5.197</b></div>
<div class="c" style="left:218.10px;top:233.04px;width:50.70px;background:#88ff88;border-left-color:#5cc4f8;border-top-color:#b2f03e"><b class="n">4.942</b></div>
<div class="c" style="left:268.80px;top:233.04px;width:50.70px;background:#85ff85;border-left-color:#5cc4f8;border-top-color:#b2f03e"><b class="n">5.070</b></div>
<div class="c" style="left:319.50px;top:233.04px;width:66.40px;background:linear-gradient(90deg,#d8ffd8,#e6ffe6);border-left-color:#ee5a44;border-top-color:#b2f03e"><b class="n">1.463</b></div>
<div class="c" style="left:385.90px;top:233.04px;width:66.40px;background:linear-gradient(90deg,#d7ffd7,#e5ffe5);border-left-color:#ee5a44;border-top-color:#b2f03e"><b class="n">1.493</b></div>
<div class="c" style="left:452.30px;top:233.04px;width:66.40px;background:linear-gradient(90deg,#deffde,#eaffea);border-left-color:#ee5a44;border-top-color:#b2f03e"><b class="n">1.212</b></div>
<div class="c" style="left:518.70px;top:233.04px;width:66.40px;background:linear-gradient(90deg,#c0ffc0,#d6ffd6);border-left-color:#ee5a44;border-top-color:#b2f03e"><b class="n">2.352</b></div>
<div class="rh" style="top:250.96px"><b class="vi">Iris-virginica</b></div>
<div class="c" style="left:66.00px;top:250.96px;width:50.70px;background:#6bff6b;border-left-color:#5cc4f8;border-top-color:#b2f03e"><b class="n">6.174</b></div>
<div class="c" style="left:116.70px;top:250.96px;width:50.70px;background:#70ff70;border-left-color:#5cc4f8;border-top-color:#b2f03e"><b class="n">5.958</b></div>
<div class="c" style="left:167.40px;top:250.96px;width:50.70px;background:#68ff68;border-left-color:#5cc4f8;border-top-color:#b2f03e"><b class="n">6.300</b></div>
<div class="c" style="left:218.10px;top:250.96px;width:50.70px;background:#70ff70;border-left-color:#5cc4f8;border-top-color:#b2f03e"><b class="n">5.950</b></div>
<div class="c" style="left:268.80px;top:250.96px;width:50.70px;background:#6cff6c;border-left-color:#5cc4f8;border-top-color:#b2f03e"><b class="n">6.124</b></div>
<div class="c" style="left:319.50px;top:250.96px;width:66.40px;background:linear-gradient(90deg,#c6ffc6,#daffda);border-left-color:#ee5a44;border-top-color:#b2f03e"><b class="n">2.121</b></div>
<div class="c" style="left:385.90px;top:250.96px;width:66.40px;background:linear-gradient(90deg,#bcffbc,#d4ffd4);border-left-color:#ee5a44;border-top-color:#b2f03e"><b class="n">2.500</b></div>
<div class="c" style="left:452.30px;top:250.96px;width:66.40px;background:linear-gradient(90deg,#cbffcb,#deffde);border-left-color:#ee5a44;border-top-color:#b2f03e"><b class="n">1.936</b></div>
<div class="c" style="left:518.70px;top:250.96px;width:66.40px;background:linear-gradient(90deg,#a1ffa1,#c2ffc2);border-left-color:#ee5a44;border-top-color:#b2f03e"><b class="n">3.508</b></div>
</div>
<!-- scrollbars -->
<div class="sb" style="left:773px;top:226px;width:12px;height:278.5px"></div>
<div class="sb" style="left:195.5px;top:492px;width:589.5px;height:12.5px"></div>
<div class="thumb" style="left:774.2px;top:386.2px;width:10.8px;height:19.6px"></div>
<div class="thumb" style="left:373.8px;top:492.6px;width:29.2px;height:11.2px"></div>
<svg style="position:absolute;left:773px;top:226px" width="13" height="280" viewBox="0 0 13 280" fill="none" stroke="#555" stroke-width="1.3">
 <path d="M3.3 9 L6.3 5.8 L9.3 9"/><path d="M3.3 257.5 L6.3 260.7 L9.3 257.5"/>
</svg>
<svg style="position:absolute;left:195px;top:492px" width="578" height="13" viewBox="0 0 578 13" fill="none" stroke="#555" stroke-width="1.3">
 <path d="M8.8 3.3 L5.6 6.3 L8.8 9.3"/><path d="M569.5 3.3 L572.7 6.3 L569.5 9.3"/>
</svg>

<div class="cb" style="left:226.3px;top:509.5px;width:92.5px;height:16px"></div>
<svg style="position:absolute;left:308px;top:516px" width="7" height="4" viewBox="0 0 7 4"><path d="M0.3 0 H6.3 L3.3 3.6 Z" fill="#111"/></svg>

<div class="btn" style="left:535px;top:509.5px;width:57.5px;height:16.2px"></div>
<div class="chk" style="left:630.8px;top:513px;width:10.2px;height:9.7px"></div>
<svg style="position:absolute;left:632px;top:514px" width="8" height="8" viewBox="0 0 8 8"><path d="M1.2 4 L3.1 6 L6.8 1.3" fill="none" stroke="#111" stroke-width="1.5"/></svg>
<div class="btn dis" style="left:652.5px;top:510px;width:133.3px;height:15.6px"></div>

<span class="t" style="left:244.80px;top:9.00px;font-size:12.4px;letter-spacing:-0.350px;color:#262626;">Distance Matrix*</span>
<span class="t" style="left:59.60px;top:29.00px;font-size:9.8px;letter-spacing:-0.574px;color:#9e9e9e;">File</span>
<span class="t" style="left:86.00px;top:29.00px;font-size:9.8px;letter-spacing:-0.423px;color:#9e9e9e;">Edit</span>
<span class="t" style="left:114.40px;top:29.00px;font-size:9.8px;letter-spacing:-0.566px;color:#9e9e9e;">View</span>
<span class="t" style="left:146.20px;top:29.00px;font-size:9.8px;letter-spacing:-0.300px;color:#9e9e9e;">Widget</span>
<span class="t" style="left:188.75px;top:29.00px;font-size:9.8px;letter-spacing:-0.245px;color:#9e9e9e;">Options</span>
<span class="t" style="left:233.90px;top:29.00px;font-size:9.8px;letter-spacing:-0.489px;color:#9e9e9e;">Help</span>
<span class="t" style="left:73.30px;top:48.00px;font-size:8px;letter-spacing:-0.153px;color:#111;font-weight:bold">»</span>
<span class="t" style="left:150.75px;top:165.00px;font-size:10px;letter-spacing:-0.156px;color:#333;">File</span>
<span class="t" style="left:242.50px;top:115.00px;font-size:10px;letter-spacing:-0.017px;color:#333;">Distances</span>
<span class="t" style="left:325.50px;top:170.00px;font-size:10px;letter-spacing:-0.260px;color:#333;">Distance Matrix</span>
<span class="t" style="left:13.30px;top:209.00px;font-size:9px;letter-spacing:0.244px;color:#333;font-family:'Liberation Serif',serif;font-weight:bold">Δ</span>
<span class="t" style="left:26.70px;top:207.00px;font-size:12.4px;letter-spacing:-0.666px;color:#262626;">Di...</span>
<span class="t" style="left:22.00px;top:231.00px;font-size:9.4px;letter-spacing:-0.489px;color:#111;background:#f0f0f0;box-shadow:-1.5px 0 0 #f0f0f0,1.5px 0 0 #f0f0f0">Distances between</span>
<span class="t" style="left:33.80px;top:249.00px;font-size:9.4px;letter-spacing:-0.763px;color:#111;">Rows</span>
<span class="t" style="left:33.80px;top:265.00px;font-size:9.4px;letter-spacing:-0.814px;color:#111;">Columns</span>
<span class="t" style="left:22.00px;top:293.00px;font-size:9.4px;letter-spacing:-0.501px;color:#111;background:#f0f0f0;box-shadow:-1.5px 0 0 #f0f0f0,1.5px 0 0 #f0f0f0">Distance Metric</span>
<span class="t" style="left:22.00px;top:311.00px;font-size:9.4px;letter-spacing:-0.665px;color:#111;">Euclidean</span>
<span class="t" style="left:51.50px;top:337.00px;font-size:9.4px;letter-spacing:-0.323px;color:#111;">Report</span>
<span class="t" style="left:24.30px;top:363.00px;font-size:9.4px;letter-spacing:-0.457px;color:#111;">Apply automatically</span>
<span class="t" style="left:54.50px;top:381.00px;font-size:9.4px;letter-spacing:-0.531px;color:#8c8c8c;">Apply</span>
<span class="t" style="left:196.60px;top:207.00px;font-size:9px;letter-spacing:0.244px;color:#1f3a3a;font-family:'Liberation Serif',serif;font-weight:bold">Δ</span>
<span class="t" style="left:451.00px;top:203.00px;font-size:12.4px;letter-spacing:-0.399px;color:#25595c;">Distance Matrix</span>
<span class="t" style="left:193.75px;top:513.00px;font-size:9.4px;letter-spacing:-0.569px;color:#111;">Labels:</span>
<span class="t" style="left:228.75px;top:513.00px;font-size:9.4px;letter-spacing:-0.793px;color:#111;">None</span>
<span class="t" style="left:550.75px;top:513.00px;font-size:9.4px;letter-spacing:-0.440px;color:#111;">Report</span>
<span class="t" style="left:683.25px;top:513.00px;font-size:9.4px;letter-spacing:-0.513px;color:#8c8c8c;">Send Automatically</span>
</body></html>
